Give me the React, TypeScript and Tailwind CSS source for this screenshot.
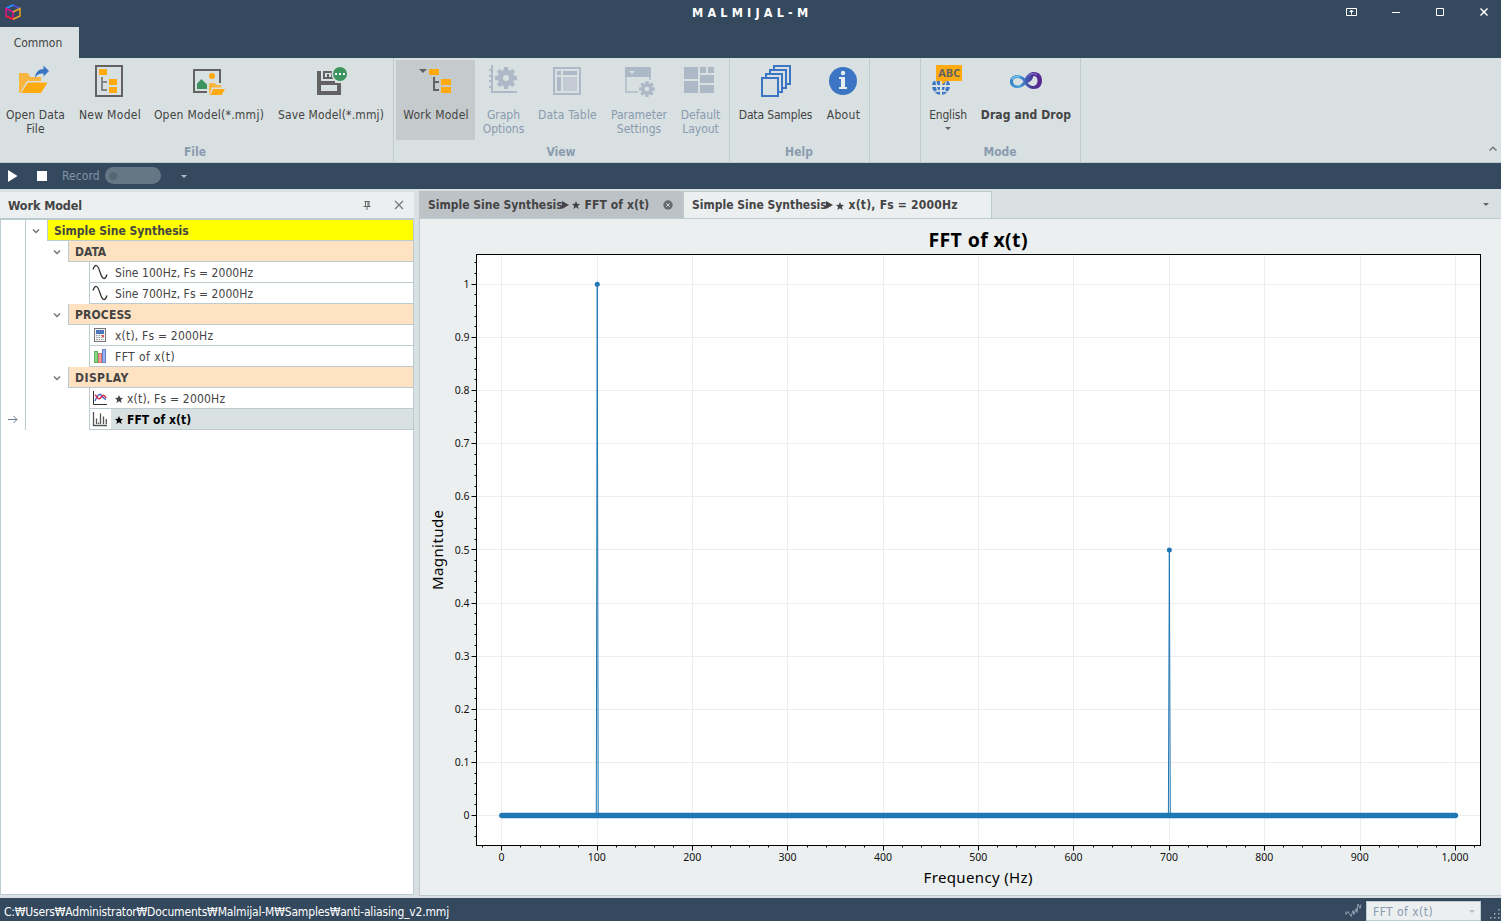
import type { ReactNode } from 'react'

const DARK = '#626262'
const ORANGE = '#ffaa10'
const BLUE = '#3b75c4'
const GREEN = '#3d945f'
const MUTED = '#aeb9c7'

function Icon({ children }: { children: ReactNode }) {
  return (
    <svg width="32" height="32" viewBox="0 0 32 32" className="block shrink-0 overflow-visible">
      {children}
    </svg>
  )
}

function Gear({ cx, cy, r, hole }: { cx: number; cy: number; r: number; hole: number }) {
  const t = r * 0.4
  return (
    <g transform={`translate(${cx} ${cy})`} fill={MUTED}>
      {[0, 45, 90, 135].map((a) => (
        <rect key={a} x={-t / 2} y={-r} width={t} height={r * 2} transform={`rotate(${a})`} />
      ))}
      <circle r={r * 0.76} />
      <circle r={hole} fill="#d8e0e1" />
    </g>
  )
}

const icons: Record<string, ReactNode> = {
  openData: (
    <Icon>
      <path d="M0 28V8h9l2 4h11v4H8L1 28z" fill="#f8b540" />
      <path d="M2 28 9 17.5h19.5L22 28z" fill={ORANGE} />
      <path d="M16 13c.5-6 4-9 8.500-9V.500L30 6l-5.500 5.500V8.500c-4-.2-6.500 1-8.500 4.500z" fill={BLUE} />
    </Icon>
  ),
  newModel: (
    <Icon>
      <rect x="3" y="1" width="26" height="30" fill="none" stroke={DARK} strokeWidth="2" />
      <path d="M6 4h8v6H6zM16 14h8v6h-8zM16 22h8v6h-8z" fill={ORANGE} />
      <path d="M9 12v13h5M9 17h5" fill="none" stroke="#858787" strokeWidth="2" />
    </Icon>
  ),
  openModel: (
    <Icon>
      <path d="M14 27H1V5h26v13" fill="none" stroke={DARK} strokeWidth="2" />
      <circle cx="19" cy="11" r="3" fill={ORANGE} />
      <path d="M4 24v-5.300L8.300 14l5.700 5.500V24z" fill={GREEN} />
      <path d="M16 30V18h6l1 2h5v2.500h-9L16.500 29z" fill="#f8b540" />
      <path d="m17 30 3.300-6H32l-3.300 6z" fill={ORANGE} />
    </Icon>
  ),
  saveModel: (
    <Icon>
      <path fillRule="evenodd" d="M3 6h4v10h14v2h6v12H3zM7 20v6h16v-6z" fill={DARK} />
      <path fillRule="evenodd" d="M9 6h10v8H9zM11 8v4h2V8zM15 8v4h2V8z" fill={DARK} />
      <path d="M11 8h4v4h-4z" fill="#d8e0e1" />
      <path d="M13 9h2v3h-2z" fill={DARK} />
      <circle cx="26" cy="9" r="8.500" fill="#d8e0e1" />
      <circle cx="26" cy="9" r="7" fill={GREEN} />
      <path d="M21 8h2v2h-2zM25 8h2v2h-2zM29 8h2v2h-2z" fill="#fff" />
    </Icon>
  ),
  workModel: (
    <Icon>
      <path d="M0 4h8L4 8z" fill={DARK} />
      <path d="M10 4h10v6H10zM22 14h10v6H22zM22 22h10v6H22z" fill={ORANGE} />
      <path d="M15 12v13h5M15 17h5" fill="none" stroke={DARK} strokeWidth="2" />
    </Icon>
  ),
  graph: (
    <Icon>
      <path d="M5 0v27h25M2 5h3M2 11h3M2 16h3M2 22h3" fill="none" stroke={MUTED} strokeWidth="2" />
      <Gear cx={19} cy={13} r={11} hole={3} />
    </Icon>
  ),
  table: (
    <Icon>
      <rect x="3" y="3" width="26" height="26" fill="none" stroke={MUTED} strokeWidth="2" />
      <path d="M6 6h4v4H6zM12 6h14v4H12zM6 12h4v14H6z" fill={MUTED} />
      <path d="M12 12h14v14H12z" fill="#c3cad4" />
    </Icon>
  ),
  params: (
    <Icon>
      <path d="M3 2h26v10H3z" fill={MUTED} />
      <path d="M4 10v17h12M28 10v5" fill="none" stroke={MUTED} strokeWidth="1.500" />
      <path d="M7 6h6l-3 3z" fill="#d8e0e1" />
      <circle cx="25" cy="24" r="8.500" fill="#d8e0e1" />
      <Gear cx={25} cy={24} r={8} hole={2.3} />
    </Icon>
  ),
  layout: (
    <Icon>
      <path d="M0 2h14v12H0zM0 16h14v12H0zM16 2h6v6h-6zM24 2h6v6h-6zM16 10h14v8H16zM16 20h14v8H16z" fill={MUTED} />
    </Icon>
  ),
  samples: (
    <Icon>
      {[0, 1, 2, 3].map((i) => (
        <rect key={i} x={15 - i * 4} y={1 + i * 4} width="16" height="18" fill="#d8e0e1" stroke={BLUE} strokeWidth="2" />
      ))}
    </Icon>
  ),
  about: (
    <Icon>
      <circle cx="16" cy="16" r="14" fill={BLUE} />
      <circle cx="16" cy="8" r="2.200" fill="#e8eef0" />
      <path d="M12 12h6v10h2v2h-8v-2h2v-8h-2z" fill="#e8eef0" />
    </Icon>
  ),
  english: (
    <Icon>
      <circle cx="9" cy="21" r="9" fill={BLUE} />
      <path d="M9 16v14M0 21h18" fill="none" stroke="#d8e0e1" strokeWidth="2" />
      <path d="M1.500 27.500q7.500-4 15 0M4 16q0 3 1.500 5M14 16q0 3-1.500 5M4.500 22q.5 3 2.500 5M13.500 22q-.5 3-2.500 5" fill="none" stroke="#d8e0e1" strokeWidth="1.300" />
      <path d="M0 11h18v5H0z" fill="#d8e0e1" />
      <path d="M4 0h26v16H14l-4 4v-4H4z" fill={ORANGE} />
      <text x="17.200" y="12" textAnchor="middle" fontSize="11" fontWeight="700" fill={DARK} fontFamily="Noto Sans, sans-serif" textLength="22">
        ABC
      </text>
    </Icon>
  ),
  dragDrop: (
    <Icon>
      <defs>
        <linearGradient id="inf">
          <stop offset="0" stopColor="#2f7fc4" />
          <stop offset=".3" stopColor="#4aa3dc" />
          <stop offset=".5" stopColor="#3f5fb4" />
          <stop offset=".7" stopColor="#4a3596" />
          <stop offset="1" stopColor="#5d2590" />
        </linearGradient>
      </defs>
      <path
        fillRule="evenodd"
        d="M0 16.500C0 12 4 9.500 8 10c3 .300 5 2 7 3.500C17 9.500 20 7 24 7c5 0 8 3.500 8 8.500S29 24 24 24c-4 0-6.500-2-9-4.500C13 21.500 11 23 7.500 23 3 23 0 20.500 0 16.500zM3 16.500c0 2.500 2 4 4.500 4s4.500-1.800 6-4c-1.500-2-3.500-3.500-6-3.500s-4.500 1-4.500 3.500zM17.500 18c1.500 1.500 3.500 3 5.500 3 3 0 4.500-2.500 4.500-5.500s-1.500-4.500-4-4.500c-1 4-3 5.500-6 7z"
        fill="url(#inf)"
      />
      <path d="M2 14.500c1-2.500 4-4 7-2.800" fill="none" stroke="#8fd0f0" strokeWidth="1.200" />
      <path d="M18 11.500c2-3 6-4 9-1.500" fill="none" stroke="#8a6ccc" strokeWidth="1.200" />
    </Icon>
  ),
}

type Item = { icon: string; label: string; width: string; text?: string; muted?: boolean; active?: boolean; arrow?: boolean }
type Group = { name: string; width: string; items: Item[] }

const groups: Group[] = [
  {
    name: 'File',
    width: 'w-[394px]',
    items: [
      { icon: 'openData', label: 'Open Data\nFile', width: 'w-[70px]', text: 'tracking-[0.1px] pl-px' },
      { icon: 'newModel', label: 'New Model', width: 'w-[78px]', text: 'tracking-[0.3px] pl-[2px]' },
      { icon: 'openModel', label: 'Open Model(*.mmj)', width: 'w-[122px]', text: 'tracking-[0.25px]' },
      { icon: 'saveModel', label: 'Save Model(*.mmj)', width: 'w-[120px]', text: 'tracking-[0.15px] pl-[2px]' },
    ],
  },
  {
    name: 'View',
    width: 'w-[336px] pl-[2px]',
    items: [
      { icon: 'workModel', label: 'Work Model', width: 'w-[79px]', text: 'tracking-[0.25px] pl-px', active: true },
      { icon: 'graph', label: 'Graph\nOptions', width: 'w-[56px]', text: 'pl-px', muted: true },
      { icon: 'table', label: 'Data Table', width: 'w-[72px]', text: 'tracking-[0.2px] pl-px', muted: true },
      { icon: 'params', label: 'Parameter\nSettings', width: 'w-[71px]', text: 'pl-px', muted: true },
      { icon: 'layout', label: 'Default\nLayout', width: 'w-[53px]', muted: true },
    ],
  },
  {
    name: 'Help',
    width: 'w-[140px] pl-[2px]',
    items: [
      { icon: 'samples', label: 'Data Samples', width: 'w-[87px]', text: 'tracking-[-0.15px]' },
      { icon: 'about', label: 'About', width: 'w-[48px]', text: 'tracking-[0.3px] pl-px' },
    ],
  },
  { name: '', width: 'w-[51px]', items: [] },
  {
    name: 'Mode',
    width: 'w-[160px] pl-[2px]',
    items: [
      { icon: 'english', label: 'English', width: 'w-[50px]', text: 'tracking-[-0.2px]', arrow: true },
      { icon: 'dragDrop', label: 'Drag and Drop', width: 'w-[106px]', text: 'font-bold tracking-[0.1px]' },
    ],
  },
]

// items with an odd width would put their icon on a half pixel
const isOdd = (width: string) => parseInt(width.slice(3)) % 2 === 1

function Ribbon() {
  return (
    <div className="flex h-[105px] border-b border-[#bccbce] bg-[#d8e0e1]">
      {groups.map((g, i) => (
        <div key={i} className={`flex shrink-0 flex-col border-r border-[#c0cccf] pt-[2px] ${g.width}`}>
          <div className="flex h-20">
            {g.items.map((it) => (
              <div
                key={it.label}
                className={`flex shrink-0 flex-col items-center pt-[5px] ${it.width} ${it.active ? 'bg-[#c5cacc]' : ''} ${it.muted ? 'text-[#8a9bb0]' : 'text-[#444]'}`}
              >
                <div className={isOdd(it.width) ? 'mr-px' : ''}>{icons[it.icon]}</div>
                <span className={`mt-[11px] text-center leading-[14px] whitespace-pre ${it.text ?? ''}`}>{it.label}</span>
                {it.arrow && <Caret className="mt-[5px] text-[#666]" />}
              </div>
            ))}
          </div>
          <div className="-ml-[3px] pt-[4px] text-center leading-4 font-bold text-[#8a9bb0]">{g.name}</div>
        </div>
      ))}
      <svg width="8" height="5" viewBox="0 0 8 5" className="mt-[88px] mr-1 ml-auto">
        <path d="M.5 4.500 4 1.200l3.500 3.300" fill="none" stroke="#777" strokeWidth="1.500" />
      </svg>
    </div>
  )
}

function Caret({ className = '' }: { className?: string }) {
  return (
    <svg width="6" height="3" viewBox="0 0 6 3" className={`shrink-0 ${className}`}>
      <path d="M0 0h6L3 3z" fill="currentColor" />
    </svg>
  )
}

function TitleBar() {
  return (
    <div className="flex h-[27px] items-center pb-[3px] text-white">
      <svg width="16" height="16" viewBox="0 0 16 16" fill="none" strokeWidth="1.500" className="ml-[5px]">
        <path d="M1 4.500 8 8l7-3.500L8 1z" stroke="#4a52e8" />
        <path d="M1 4.500 8 1" stroke="#2196f3" />
        <path d="M1 4.500V12l7 3.300V8z" stroke="#e0108a" />
        <path d="M1 12l7 3.300" stroke="#f02030" />
        <path d="M8 15.300 15 12V4.500L8 8" stroke="#f0a020" />
      </svg>
      <div className="mt-[3px] ml-[671px] text-[12.500px] font-bold tracking-[4.200px]">MALMIJAL-M</div>
      <div className="mr-[12px] ml-auto flex items-center gap-[32px]">
        <svg width="12" height="12" viewBox="0 0 12 12" fill="none" stroke="#fff">
          <path d="M.5 2.500h10v7H.5zM5.500 8.500V4M3.500 5.500h4M4.500 4.500h2" />
        </svg>
        <svg width="12" height="12" viewBox="0 0 12 12" stroke="#fff">
          <path d="M2 6.500h8" />
        </svg>
        <svg width="12" height="12" viewBox="0 0 12 12" fill="none" stroke="#fff" className="mr-px">
          <path d="M2.500 2.500h7v7h-7z" />
        </svg>
        <svg width="10" height="10" viewBox="0 0 10 10" stroke="#fff" strokeWidth="1.500">
          <path d="m1.500 1.500 7 7m0-7-7 7" />
        </svg>
      </div>
    </div>
  )
}

function Toolbar() {
  return (
    <div className="flex h-[26px] items-center pb-px text-[#8194a5]">
      <svg width="10" height="12" viewBox="0 0 10 12" className="ml-2">
        <path d="M0 0v12l9.500-6z" fill="#fff" />
      </svg>
      <span className="mt-px ml-[19px] h-[10px] w-[10px] bg-white" />
      <span className="ml-[15px] w-[43px] tracking-[0.1px]">Record</span>
      <span className="flex h-[17px] w-14 items-center rounded-full bg-[#657785] pl-1">
        <span className="h-2 w-2 rounded-full bg-[#566673]" />
      </span>
      <Caret className="mt-[2px] ml-5 text-[#b4bec6]" />
    </div>
  )
}

const treeIcons: Record<string, ReactNode> = {
  sine: <path d="M1 5.500C3-.5 5.500 0 8 8s5 8.500 7 2.500" fill="none" stroke="#333" strokeWidth="1.300" />,
  calc: (
    <>
      <rect x="2.500" y="1.500" width="11" height="13" fill="#f4f4f4" stroke="#777" />
      <path d="M4 3h8v4H4z" fill="#4a78b8" />
      <path d="M4 8.500h8M4 10.500h8M4 12.500h8" stroke="#999" strokeDasharray="1.500 1" />
      <path d="M10 8h2v2h-2z" fill="#d85050" />
    </>
  ),
  bars: (
    <>
      <rect x="2.500" y="3.500" width="3" height="11" fill="#8ad888" stroke="#5cb85a" />
      <rect x="6.500" y="5.500" width="3" height="9" fill="#f0a0a0" stroke="#d87070" />
      <rect x="10.500" y="1.500" width="3" height="13" fill="#9ab0f0" stroke="#6684cc" />
    </>
  ),
  line: (
    <>
      <path d="M1.500 1v13.500H15" fill="none" stroke="#333" />
      <path d="M3 11c2-5 4-8 6-6s3 4 5 4.500" fill="none" stroke="#4468d0" strokeWidth="1.500" />
      <path d="M3 5c2 1 3 5 5 3.500s3-6 6-.5" fill="none" stroke="#e03048" strokeWidth="1.500" />
    </>
  ),
  fft: (
    <path
      d="M1.500 1v13.500H15M4.500 13V7.500M6.500 13v-1.500M8.500 13V2.500M11.500 13V5.500M14.300 13V8"
      fill="none"
      stroke="#555"
      strokeWidth="1.300"
    />
  ),
}

const rows = [
  { level: 0, label: 'Simple Sine Synthesis' },
  { level: 1, label: 'DATA' },
  { level: 2, label: 'Sine 100Hz, Fs = 2000Hz', icon: 'sine', text: 'tracking-[0.05px]' },
  { level: 2, label: 'Sine 700Hz, Fs = 2000Hz', icon: 'sine', text: 'tracking-[0.05px]' },
  { level: 1, label: 'PROCESS', text: 'tracking-[0.15px]' },
  { level: 2, label: 'x(t), Fs = 2000Hz', icon: 'calc', text: 'tracking-[0.2px]' },
  { level: 2, label: 'FFT of x(t)', icon: 'bars', text: 'tracking-[0.45px]' },
  { level: 1, label: 'DISPLAY', text: 'tracking-[0.45px]' },
  { level: 2, label: 'x(t), Fs = 2000Hz', icon: 'line', star: true, text: 'tracking-[0.2px]' },
  { level: 2, label: 'FFT of x(t)', icon: 'fft', star: true, selected: true, text: 'tracking-[0.05px]' },
]

const cellStyle = ['bg-[#ffff00] font-bold', 'bg-[#ffe2c2] font-bold', 'bg-white']
const indent = ['w-[21px]', 'w-[42px]', 'w-[63px]']

function Star() {
  return (
    <svg width="8" height="8" viewBox="0 0 24 24" className="mr-1 inline-block shrink-0">
      <path d="m12 0 3.500 8.500 8.500.5-6.500 6 2.500 9-8-5-8 5 2.500-9L0 9l8.500-.5z" fill="currentColor" />
    </svg>
  )
}

function WorkModel() {
  return (
    <div className="flex w-[414px] shrink-0 flex-col">
      <div className="flex h-[26px] items-center bg-[#ebeff0] pr-[10px] pl-2">
        <span className="pt-[2px] text-[12.500px] font-bold tracking-[-0.1px] text-[#444]">Work Model</span>
        <svg width="8" height="10" viewBox="0 0 8 10" fill="none" stroke="#666" className="mr-[23px] ml-auto">
          <path d="M2.500 1v5M1.500 1.500h5M5 1v5M6 1v5M.5 6.500h7M4 6.500V10" />
        </svg>
        <svg width="10" height="10" viewBox="0 0 10 10" stroke="#777" strokeWidth="1.300">
          <path d="m1 1 8 8m0-8-8 8" />
        </svg>
      </div>
      <div className="h-[677px] border border-t-2 border-[#bccbd0] bg-white">
        {rows.map((r, i) => (
          <div key={i} className="flex h-[21px]">
            <div className="flex w-[25px] items-center border-r border-[#bccbd0] pl-[7px]">
              {r.selected && (
                <svg width="10" height="8" viewBox="0 0 10 8" fill="none" stroke="#6b7c90" className="-mt-px">
                  <path d="M0 4.500h9M5.500 1 9 4.500 5.500 8" />
                </svg>
              )}
            </div>
            <div className={`flex items-center justify-end pr-[7px] ${indent[r.level]}`}>
              {r.level < 2 && (
                <svg width="8" height="5" viewBox="0 0 8 5" className="mt-[2px]">
                  <path d="m1 .500 3 3 3-3" fill="none" stroke="#777" strokeWidth="1.500" />
                </svg>
              )}
            </div>
            <div
              className={`flex flex-1 items-center border-b border-l border-[#bccbd0] ${cellStyle[r.level]} ${r.selected ? 'font-bold text-black' : 'text-[#444]'}`}
            >
              {r.icon && (
                <span className="flex h-full w-[21px] items-center justify-center bg-white pr-px">
                  <svg width="16" height="16" viewBox="0 0 16 16">
                    {treeIcons[r.icon]}
                  </svg>
                </span>
              )}
              <span
                className={`flex h-full flex-1 items-center pt-[2px] ${r.icon ? 'pl-1' : 'pl-[6px]'} ${r.selected ? 'bg-[#d8e0e1]' : ''} ${r.text ?? ''}`}
              >
                {r.star && <Star />}
                {r.label}
              </span>
            </div>
          </div>
        ))}
      </div>
    </div>
  )
}

const X0 = 81.9
const XS = 95.35
const Y0 = 596.6
const YS = 53.14
const LEFT = 56.5
const RIGHT = 1060.5
const TOP = 35.5
const BOTTOM = 626.5

const snap = (n: number) => Math.floor(n) + 0.5
const px = (hz: number) => X0 + (hz / 100) * XS
const py = (v: number) => Y0 - v * 10 * YS
const majors = Array.from({ length: 11 }, (_, i) => i)
const minorX = Array.from({ length: 53 }, (_, i) => px((i - 1) * 20))
const minorY = Array.from({ length: 55 }, (_, i) => py((i - 2) * 0.02)).filter((y) => y > TOP && y < BOTTOM)

function Chart() {
  return (
    <svg width="1081" height="676" viewBox="0 0 1081 676" className="block font-['Noto_Sans',sans-serif]">
      <rect x={LEFT} y={TOP} width={RIGHT - LEFT} height={BOTTOM - TOP} fill="#fff" />
      {majors.map((i) => (
        <g key={i}>
          <path d={`M${snap(px(i * 100))} ${TOP}V${BOTTOM}M${LEFT} ${snap(py(i / 10))}H${RIGHT}`} stroke="#ededed" />
          <path d={`M${snap(px(i * 100))} ${BOTTOM}v5M${LEFT} ${snap(py(i / 10))}h-5`} stroke="#000" />
          <text x={px(i * 100) - 0.4} y="642.300" textAnchor="middle" fontSize="10.500" fill="#111">
            {i === 10 ? '1,000' : i * 100}
          </text>
          <text x="49.500" y={py(i / 10) + 3.6} textAnchor="end" fontSize="10.500" fill="#111">
            {i / 10}
          </text>
        </g>
      ))}
      {minorX.map((x, i) => (
        <path key={i} d={`M${snap(x)} ${BOTTOM}v2`} stroke="#000" />
      ))}
      {minorY.map((y, i) => (
        <path key={i} d={`M${LEFT} ${snap(y)}h-2`} stroke="#000" />
      ))}
      <rect x={LEFT} y={TOP} width={RIGHT - LEFT} height={BOTTOM - TOP} fill="none" stroke="#000" />
      <g stroke="#1f77b4" fill="none">
        <path d={`M${px(0)} ${Y0}H${px(1000)}`} strokeWidth="5.500" strokeLinecap="round" />
        <path d={`M${px(99)} ${Y0}L${px(100)} ${py(1)}L${px(101)} ${Y0}`} />
        <path d={`M${px(699)} ${Y0}L${px(700)} ${py(0.5)}L${px(701)} ${Y0}`} />
      </g>
      <circle cx={px(100)} cy={py(1)} r="2.500" fill="#1f77b4" />
      <circle cx={px(700)} cy={py(0.5)} r="2.500" fill="#1f77b4" />
      <text x="558" y="28" textAnchor="middle" fontSize="19.500" fontWeight="700" textLength="99">
        FFT of x(t)
      </text>
      <text x="558" y="663.500" textAnchor="middle" fontSize="15" textLength="109">
        Frequency (Hz)
      </text>
      <text transform="translate(23 331) rotate(-90)" textAnchor="middle" fontSize="15" textLength="80">
        Magnitude
      </text>
    </svg>
  )
}

function Documents() {
  return (
    <div className="flex flex-1 flex-col">
      <div className="-mt-px flex h-[28px] items-stretch border-b border-[#bccbd0] font-bold text-[#444]">
        <div className="flex w-[264px] items-center bg-[#bdc2c7] pl-[9px]">
          <span className="w-[235px]">
            Simple Sine Synthesis<Play /> <Star />
            <span className="tracking-[0.1px]">FFT of x(t)</span>
          </span>
          <svg width="10" height="10" viewBox="0 0 10 10" className="mt-px">
            <circle cx="5" cy="5" r="4.700" fill="#666b6f" />
            <path d="m3.300 3.300 3.400 3.400m0-3.400L3.300 6.700" stroke="#cdd2d6" />
          </svg>
        </div>
        <div className="flex w-[309px] items-center border border-b-0 border-[#bccbd0] bg-[#ebeff0] pl-2">
          <span>
            Simple Sine Synthesis<Play /> <Star />
            <span className="tracking-[0.22px]">x(t), Fs = 2000Hz</span>
          </span>
        </div>
        <Caret className="mt-[12px] mr-3 ml-auto text-[#666]" />
      </div>
      <div className="border-b border-l border-[#bccbd0] bg-[#ebeff0]">
        <Chart />
      </div>
    </div>
  )
}

function Play() {
  return (
    <svg width="7" height="8" viewBox="0 0 7 8" className="-mt-px -ml-px inline-block">
      <path d="M0 0v8l7-4z" fill="currentColor" />
    </svg>
  )
}

function StatusBar() {
  return (
    <div className="flex h-[23px] items-center pl-1 text-white">
      <span className="mt-[4px] tracking-[-0.17px] whitespace-pre">
        C:₩Users₩Administrator₩Documents₩Malmijal-M₩Samples₩anti-aliasing_v2.mmj
      </span>
      <svg width="17" height="14" viewBox="0 0 17 14" className="mt-[2px] ml-auto">
        <path d="M1 7.500v3l2-3 2 3 1 2 2-6 1 4 2-6 1 4 1-9 2 5 1-4" fill="none" stroke="#8ea2b4" />
      </svg>
      <div className="mt-[3px] mr-[8px] ml-1 flex h-5 w-[115px] items-center border border-[#bccbd0] bg-[#ebeff0] pr-[5px] pl-[6px] tracking-[0.45px] text-[#8a9bb0]">
        <span className="pt-px">FFT of x(t)</span>
        <Caret className="ml-auto text-[#b8c0c6]" />
      </div>
      <svg width="12" height="12" viewBox="0 0 12 12" fill="#a8b4be" className="mt-[8px]">
        <path d="M9 1h1.500v1.500H9zM5 5h1.500v1.500H5zM9 5h1.500v1.500H9zM1 9h1.500v1.500H1zM5 9h1.500v1.500H5zM9 9h1.500v1.500H9z" />
      </svg>
    </div>
  )
}

export default function App() {
  return (
    <div className="flex h-[921px] w-[1501px] flex-col overflow-hidden bg-[#34495e] font-['DejaVu_Sans_Condensed','Noto_Sans_CJK_KR',sans-serif] text-[12px]">
      <TitleBar />
      <div className="flex h-[31px]">
        <div className="flex w-[79px] items-center justify-center bg-[#d8e0e1] pr-[3px] text-[#444]">Common</div>
      </div>
      <Ribbon />
      <Toolbar />
      <div className="flex h-[709px] gap-[5px] bg-[#d8e0e1] pt-[3px]">
        <WorkModel />
        <Documents />
      </div>
      <StatusBar />
    </div>
  )
}
